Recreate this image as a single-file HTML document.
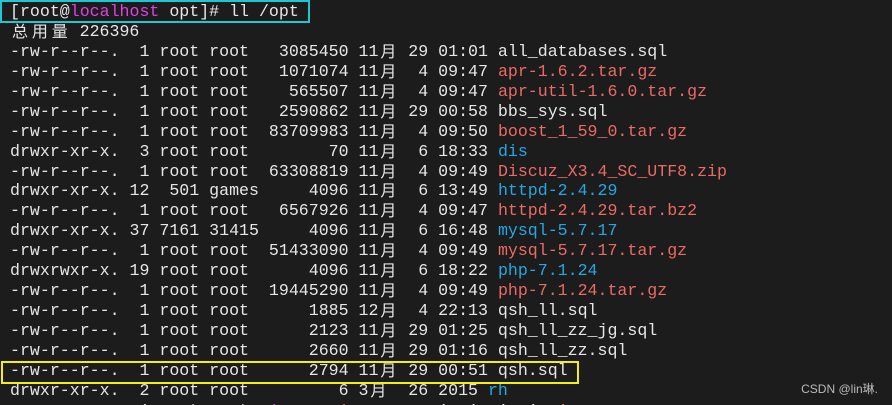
<!DOCTYPE html>
<html><head><meta charset="utf-8"><style>
html,body{margin:0;padding:0;background:#1c1c1c;width:892px;height:405px;overflow:hidden;position:relative}
.t{position:absolute;left:10px;top:2px;font-family:"Liberation Mono",monospace;font-size:16.6px;color:#e6e6e6;white-space:pre}
.t div{height:19.95px;line-height:19.95px;overflow:visible}
.c{display:inline-block;width:19.9px;height:19.95px;line-height:17px;vertical-align:top;text-align:center;font-family:"Noto Sans CJK SC",sans-serif;font-size:16px}
.r{color:#ec6a64}.b{color:#22a8e6}.m{color:#e040e0}
.box1{position:absolute;left:0;top:0;width:306px;height:19px;border:2px solid #1ec8d2}
.box2{position:absolute;left:1px;top:361px;width:574px;height:19px;border:2px solid #f5ee10}
.wm{position:absolute;right:14px;top:380px;font-family:"Liberation Sans","Noto Sans CJK SC",sans-serif;font-size:12px;color:#bbb}
</style></head><body>
<div class="t"><div>[root@<span class="m">localhost</span> opt]# ll /opt</div><div><span class="c">总</span><span class="c">用</span><span class="c">量</span> 226396</div><div>-rw-r--r--.  1 root root   3085450 11<span class="c">月</span> 29 01:01 all_databases.sql</div><div>-rw-r--r--.  1 root root   1071074 11<span class="c">月</span>  4 09:47 <span class="r">apr-1.6.2.tar.gz</span></div><div>-rw-r--r--.  1 root root    565507 11<span class="c">月</span>  4 09:47 <span class="r">apr-util-1.6.0.tar.gz</span></div><div>-rw-r--r--.  1 root root   2590862 11<span class="c">月</span> 29 00:58 bbs_sys.sql</div><div>-rw-r--r--.  1 root root  83709983 11<span class="c">月</span>  4 09:50 <span class="r">boost_1_59_0.tar.gz</span></div><div>drwxr-xr-x.  3 root root        70 11<span class="c">月</span>  6 18:33 <span class="b">dis</span></div><div>-rw-r--r--.  1 root root  63308819 11<span class="c">月</span>  4 09:49 <span class="r">Discuz_X3.4_SC_UTF8.zip</span></div><div>drwxr-xr-x. 12  501 games     4096 11<span class="c">月</span>  6 13:49 <span class="b">httpd-2.4.29</span></div><div>-rw-r--r--.  1 root root   6567926 11<span class="c">月</span>  4 09:47 <span class="r">httpd-2.4.29.tar.bz2</span></div><div>drwxr-xr-x. 37 7161 31415     4096 11<span class="c">月</span>  6 16:48 <span class="b">mysql-5.7.17</span></div><div>-rw-r--r--.  1 root root  51433090 11<span class="c">月</span>  4 09:49 <span class="r">mysql-5.7.17.tar.gz</span></div><div>drwxrwxr-x. 19 root root      4096 11<span class="c">月</span>  6 18:22 <span class="b">php-7.1.24</span></div><div>-rw-r--r--.  1 root root  19445290 11<span class="c">月</span>  4 09:49 <span class="r">php-7.1.24.tar.gz</span></div><div>-rw-r--r--.  1 root root      1885 12<span class="c">月</span>  4 22:13 qsh_ll.sql</div><div>-rw-r--r--.  1 root root      2123 11<span class="c">月</span> 29 01:25 qsh_ll_zz_jg.sql</div><div>-rw-r--r--.  1 root root      2660 11<span class="c">月</span> 29 01:16 qsh_ll_zz.sql</div><div>-rw-r--r--.  1 root root      2794 11<span class="c">月</span> 29 00:51 qsh.sql</div><div>drwxr-xr-x.  2 root root         6 3<span class="c">月</span>  26 2015 <span class="b">rh</span></div><div>-rw-r--r--.  1 root root  <span class="m">1</span>      <span class="r">1</span>         1  1  1  1  <span class="r">1</span></div></div>
<div class="box1"></div>
<div class="box2"></div>
<div class="wm">CSDN @lin琳.</div>
</body></html>
